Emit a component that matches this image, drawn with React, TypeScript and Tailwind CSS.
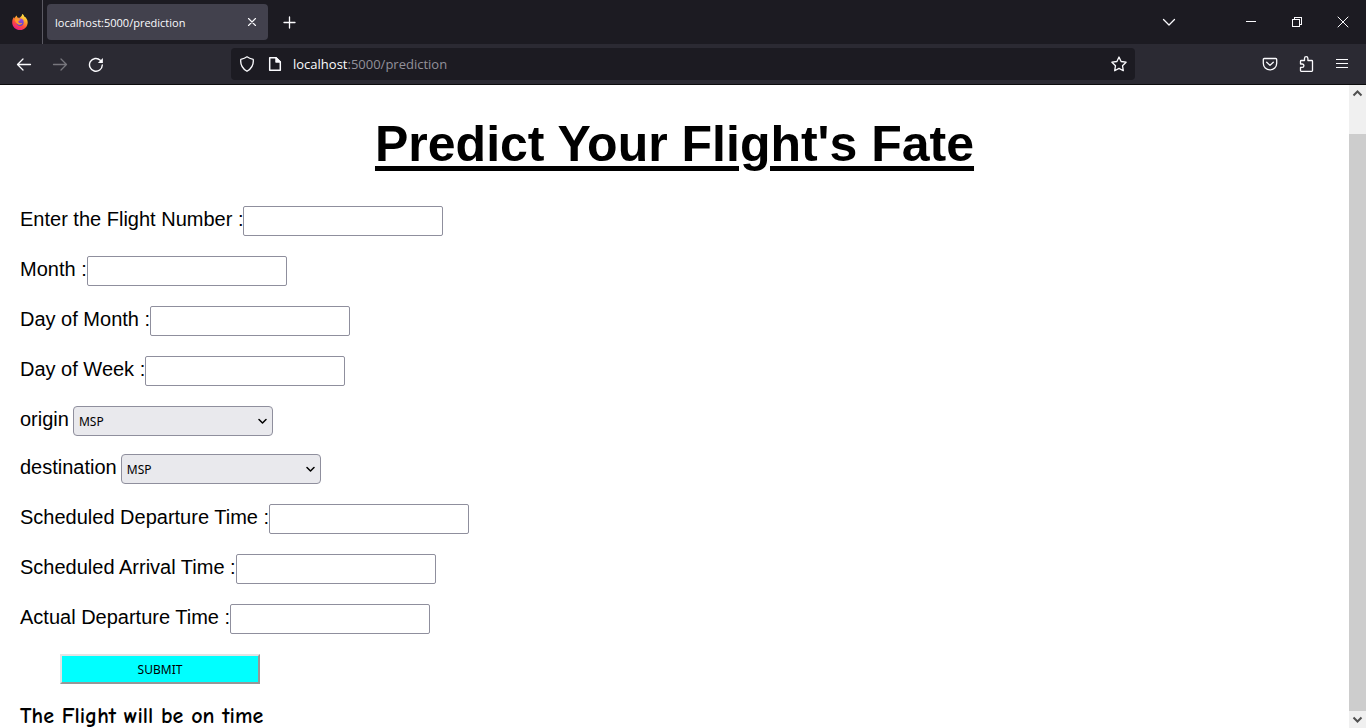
import React from "react";

const iconProps = {
  width: 16,
  height: 16,
  viewBox: "0 0 16 16",
  fill: "none",
  stroke: "currentColor",
  strokeWidth: 1.3,
  strokeLinecap: "round" as const,
  strokeLinejoin: "round" as const,
  "aria-hidden": true,
};

function Icon({ d, crisp }: { d: string; crisp?: boolean }) {
  return (
    <svg {...iconProps} strokeWidth={crisp ? 1 : 1.3} shapeRendering={crisp ? "crispEdges" : "auto"}>
      <path d={d} />
    </svg>
  );
}

function FirefoxLogo() {
  return (
    <svg width="16" height="16" viewBox="0 0 16 16" aria-hidden="true">
      <defs>
        <linearGradient id="flame" x1="0.8" y1="0" x2="0.25" y2="1">
          <stop offset="0" stopColor="#fff44f" />
          <stop offset="0.35" stopColor="#ffa52a" />
          <stop offset="0.65" stopColor="#ff4a3d" />
          <stop offset="1" stopColor="#e5178c" />
        </linearGradient>
        <linearGradient id="globe" x1="0.3" y1="0" x2="0.5" y2="1">
          <stop offset="0" stopColor="#a04be0" />
          <stop offset="1" stopColor="#5b3fd0" />
        </linearGradient>
      </defs>
      <path
        fill="url(#flame)"
        d="M10.1 0c1.6.7 1.900 1.700 2.100 2.500 1.800.8 3.400 3 3.500 5.700C15.800 12.600 12.300 16 8 16S.2 12.700.2 8.400C.2 6.300.9 4.400 2.100 3.100c0 .7.2 1.100.5 1.500.3-1.500 1.300-2.500 2.200-3 0 1 .3 1.700 1 2.200h2.100C8.700 2.800 10 2.200 10.100 0z"
      />
      <circle cx="8" cy="8.3" r="3.7" fill="url(#globe)" />
      <path fill="#ff9a2b" d="M2.700 5.100c1.100-.7 2.300-.6 3.300-.1 1.100.1 2 .2 2.400.6-.2.900-1.300 1.200-1.900 1.500-.4 1.100.2 1.800 1.100 2 .9.300 1.800-.4 2.700 0-.6 1.400-2.100 2-3.600 1.600C4.200 10.100 3.100 7.700 2.700 5.100z" />
    </svg>
  );
}

function ToolButton({ label, children, dim }: { label: string; children: React.ReactNode; dim?: boolean }) {
  return (
    <button
      type="button"
      aria-label={label}
      className={`flex size-8 shrink-0 items-center justify-center ${dim ? "text-[#77767d]" : "text-[#fbfbfe]"}`}
    >
      {children}
    </button>
  );
}

function TabBar() {
  return (
    <div className="flex h-11 shrink-0 items-center bg-[#1c1b22]">
      <div className="flex h-full w-[43px] shrink-0 items-center justify-center border-r border-[#5b5a63] pr-0.5">
        <FirefoxLogo />
      </div>
      <div className="ml-1 flex h-9 w-[221px] items-center justify-between rounded bg-[#42414d] pl-2 text-[#fbfbfe]">
        <span className="pt-0.5 text-[11px]">localhost:5000/prediction</span>
        <ToolButton label="Close tab">
          <svg {...iconProps} strokeWidth={1.1}>
            <path d="M4.500 4.500l7 7M11.500 4.500l-7 7" />
          </svg>
        </ToolButton>
      </div>
      <div className="flex pl-1.5">
        <ToolButton label="New tab">
          <Icon d="M7.500 3v11M2 8.500h11" />
        </ToolButton>
      </div>
      <div className="mr-[50px] ml-auto">
        <ToolButton label="List all tabs">
          <Icon d="M2.500 5.500L8 11l5.500-5.500" />
        </ToolButton>
      </div>
      <div className="flex gap-3.5 pr-[7px]">
        <ToolButton label="Minimize">
          <Icon crisp d="M3.500 7.500h9" />
        </ToolButton>
        <ToolButton label="Restore">
          <Icon crisp d="M3.500 5.500h7v7h-7zM5.500 5.500v-2h7v7h-2" />
        </ToolButton>
        <ToolButton label="Close window">
          <svg {...iconProps} strokeWidth={1}>
            <path d="M3 3l10 10M13 3L3 13" />
          </svg>
        </ToolButton>
      </div>
    </div>
  );
}

function NavBar() {
  return (
    <div className="flex h-[41px] shrink-0 items-center border-b border-[#0c0c0d] bg-[#2b2a33] px-2">
      <div className="flex w-[223px] gap-1">
        <ToolButton label="Back">
          <Icon d="M14.500 8.500H1.500M7 3L1.500 8.500 7 14" />
        </ToolButton>
        <ToolButton label="Forward" dim>
          <Icon d="M1.500 8.500h13M9 3L14.500 8.500 9 14" />
        </ToolButton>
        <ToolButton label="Reload">
          <svg {...iconProps} strokeWidth={1.4}>
            <path d="M14.300 9A6.400 6.400 0 1 1 12.300 4.200" />
            <path d="M14.900 2v5H9.900z" fill="currentColor" stroke="none" />
          </svg>
        </ToolButton>
      </div>
      <div className="flex h-8 max-w-[904px] flex-1 items-center rounded bg-[#1c1b22] text-[#fbfbfe]">
        <ToolButton label="Tracking protection">
          <Icon d="M8 .8c1.600 1.200 3.700 2 6.200 2.500.6 4.800-1.500 9.300-6.200 12C3.300 12.600 1.200 8.100 1.800 3.300 4.300 2.800 6.400 2 8 .8z" />
        </ToolButton>
        <div className="-ml-1">
          <ToolButton label="Site information">
            <svg {...iconProps} strokeWidth={1.5}>
              <path d="M2.700 1.700h6.300l4.300 4.300v8.300H2.700z" />
              <path d="M9 1.700V6h4.300z" fill="currentColor" />
            </svg>
          </ToolButton>
        </div>
        <div className="flex-1 pt-0.5 pl-0.5 text-[13px]">
          localhost<span className="text-[#92919a]">:5000/prediction</span>
        </div>
        <ToolButton label="Bookmark this page">
          <Icon d="M8 1l2.100 4.500 5 .7-3.600 3.500.8 5L8 12.400l-4.300 2.300.8-5L.9 6.200l5-.7z" />
        </ToolButton>
      </div>
      <div className="ml-auto flex gap-1">
        <ToolButton label="Save to Pocket">
          <Icon d="M2.300 2.500h11.400a1 1 0 0 1 1 1v3.700a6.700 6.700 0 0 1-13.400 0V3.500a1 1 0 0 1 1-1zM4.700 6.200L8 9.400l3.300-3.200" />
        </ToolButton>
        <ToolButton label="Extensions">
          <Icon d="M2.500 5.200a.7.700 0 0 1 .7-.7H6.500V2.400a1.700 1.700 0 0 1 3.400 0v2.100h3.900a.7.700 0 0 1 .7.700v9.400a.7.700 0 0 1-.7.700H3.200a.7.700 0 0 1-.7-.7v-3.200h1.700a1.700 1.700 0 0 0 0-3.400H2.500z" />
        </ToolButton>
        <ToolButton label="Open application menu">
          <Icon crisp d="M2 3.500h12M2 7.500h12M2 11.500h12" />
        </ToolButton>
      </div>
    </div>
  );
}

function TextField({ id, label }: { id: string; label: string }) {
  return (
    <div className="flex h-[30px] items-center">
      <label htmlFor={id} className="pb-1">
        {label} :
      </label>
      <input id={id} name={id} type="text" className="h-[30px] w-[200px] rounded-xs border border-[#8f8f9d] bg-white px-1" />
    </div>
  );
}

function SelectField({ id, label }: { id: string; label: string }) {
  return (
    <div className="flex h-[30px] items-center gap-1">
      <label htmlFor={id} className="pb-1">
        {label}
      </label>
      <div className="relative">
        <select
          id={id}
          name={id}
          className="block h-[30px] w-[200px] appearance-none rounded border border-[#8f8f9d] bg-[#e9e9ed] px-[5px] pt-0.5 font-['Noto_Sans',sans-serif] text-xs"
        >
          <option>MSP</option>
          <option>ATL</option>
          <option>DTW</option>
          <option>JFK</option>
          <option>SEA</option>
        </select>
        <svg className="pointer-events-none absolute top-3 right-1.5" width="9" height="7" viewBox="0 0 9 7" fill="none" stroke="#000" strokeWidth="1.5" strokeLinecap="round" strokeLinejoin="round" aria-hidden="true">
          <path d="M1 1.500l3.500 3.500L8 1.500" />
        </svg>
      </div>
    </div>
  );
}

function Scrollbar() {
  return (
    <div className="flex w-[17px] shrink-0 flex-col bg-[#f0f0f0] text-[#505050]">
      <svg width="17" height="17" viewBox="0 0 17 17" fill="none" stroke="currentColor" strokeWidth="2" className="shrink-0" aria-hidden="true">
        <path d="M4.500 10.500l4-4 4 4" />
      </svg>
      <div className="mt-8 flex-1 bg-[#cdcdcd]" />
      <svg width="17" height="17" viewBox="0 0 17 17" fill="none" stroke="currentColor" strokeWidth="2" className="shrink-0" aria-hidden="true">
        <path d="M4.500 6.500l4 4 4-4" />
      </svg>
    </div>
  );
}

export default function App() {
  return (
    <div className="flex h-screen flex-col overflow-hidden bg-white font-['Open_Sans',sans-serif]">
      <TabBar />
      <NavBar />
      <div className="flex min-h-0 flex-1">
        <main className="min-w-0 flex-1 overflow-hidden px-5 pt-[31px] font-['Liberation_Sans',Arial,sans-serif] text-xl leading-6 text-black">
          <h1 className="text-center text-[50px] leading-[56px] font-bold underline decoration-[5px] underline-offset-[5px]">
            Predict Your Flight's Fate
          </h1>
          <form className="mt-[34px] flex flex-col gap-5" onSubmit={(e) => e.preventDefault()}>
            <TextField id="flight-number" label="Enter the Flight Number" />
            <TextField id="month" label="Month" />
            <TextField id="day-of-month" label="Day of Month" />
            <TextField id="day-of-week" label="Day of Week" />
            <div className="flex flex-col gap-[18px]">
              <SelectField id="origin" label="origin" />
              <SelectField id="destination" label="destination" />
            </div>
            <TextField id="scheduled-departure" label="Scheduled Departure Time" />
            <TextField id="scheduled-arrival" label="Scheduled Arrival Time" />
            <TextField id="actual-departure" label="Actual Departure Time" />
            <button
              type="submit"
              className="ml-10 h-[30px] w-[200px] border-2 border-t-[#e3e3e3] border-r-[#979797] border-b-[#979797] border-l-[#e3e3e3] bg-[#00ffff] pt-0.5 font-['Noto_Sans',sans-serif] text-xs"
            >
              SUBMIT
            </button>
          </form>
          <p className="mt-5 font-['Comic_Sans_MS','Comic_Neue','Noto_Sans',sans-serif] text-[22px] font-bold">The Flight will be on time</p>
        </main>
        <Scrollbar />
      </div>
    </div>
  );
}
